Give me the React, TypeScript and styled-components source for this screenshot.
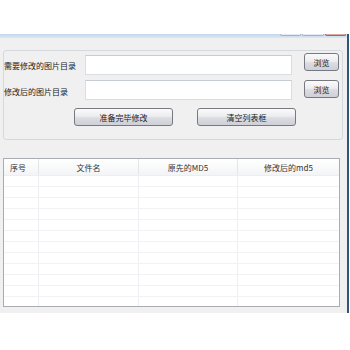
import React from 'react'
import styled, { createGlobalStyle } from 'styled-components'

const GlobalStyle = createGlobalStyle`
  html, body {
    margin: 0;
    padding: 0;
    background: #ffffff;
  }
  body {
    font-family: "Noto Sans CJK SC", "Liberation Sans", sans-serif;
    font-size: 8px;
    color: #222;
  }
`

const Page = styled.div`
  width: 350px;
  height: 350px;
  padding-top: 34px;
  box-sizing: border-box;
  background: #fff;
`

const Window = styled.div`
  width: 349px;
  height: 279px;
  box-sizing: border-box;
  display: flex;
  flex-direction: column;
  background: #f0f0f0;
  border-right: 2px solid #2f5676;
`

const CaptionBar = styled.div`
  height: 4px;
  display: flex;
  justify-content: flex-end;
  align-items: flex-start;
  gap: 1px;
  padding-right: 1px;
  background: linear-gradient(#c4d7ec, #dbe6f2);
`

const CaptionButton = styled.div<{ $close?: boolean; $w: number }>`
  width: ${({ $w }) => $w}px;
  height: 2px;
  box-sizing: border-box;
  border: 1px solid ${({ $close }) => ($close ? '#9a6a64' : '#a3b1c2')};
  border-top: none;
  border-radius: 0 0 3px 3px;
  background: ${({ $close }) => ($close ? '#d8aaa2' : '#e4ebf4')};
`

const Content = styled.div`
  flex: 1;
  display: flex;
  flex-direction: column;
  padding: 12px 4px 0 3px;
`

const GroupBox = styled.div`
  width: 340px;
  box-sizing: border-box;
  border: 1px solid #d3d9df;
  border-radius: 3px;
  padding: 2px 3px 13px 0;
  display: grid;
  grid-template-columns: 69px 207px 35px;
  column-gap: 12px;
  row-gap: 5px;
  align-items: start;
`

const Label = styled.div`
  align-self: center;
  white-space: nowrap;
  padding-top: 2px;
`

const TextBox = styled.div<{ $top?: number }>`
  height: 20px;
  margin-top: ${({ $top }) => $top ?? 0}px;
  box-sizing: border-box;
  background: #fff;
  border: 1px solid #d9dee4;
  border-top-color: #c7ccd2;
`

const Button = styled.button<{ $w?: number }>`
  width: ${({ $w }) => ($w ? `${$w}px` : '100%')};
  height: 18px;
  box-sizing: border-box;
  padding: 0;
  border: 1px solid #767a80;
  border-radius: 3px;
  background: linear-gradient(#fafafa 0%, #ededf0 45%, #dcdce2 55%, #cfd0d8 100%);
  font-family: "Noto Sans CJK SC", "Liberation Sans", sans-serif;
  font-size: 8px;
  color: #222;
  display: flex;
  align-items: center;
  justify-content: center;
`

const ActionRow = styled.div`
  grid-column: 1 / -1;
  display: flex;
  gap: 24px;
  padding-left: 70px;
  margin-top: 3px;
`

const Table = styled.div`
  margin-top: 18px;
  width: 337px;
  height: 149px;
  box-sizing: border-box;
  border: 1px solid #a9acb0;
  background: #fff;
  display: flex;
  flex-direction: column;
  overflow: hidden;
`

const Cols = '35px 100px 99px 1fr'

const HeaderRow = styled.div`
  height: 16px;
  flex-shrink: 0;
  display: grid;
  grid-template-columns: ${Cols};
  background: linear-gradient(#ffffff, #f3f4f6);
  border-bottom: 1px solid #eceef0;
`

const HeaderCell = styled.div<{ $left?: boolean }>`
  display: flex;
  align-items: center;
  justify-content: ${({ $left }) => ($left ? 'flex-start' : 'center')};
  padding-left: ${({ $left }) => ($left ? '6px' : '0')};
  border-right: 1px solid #e3e5e8;
  color: #333;
  &:last-child {
    border-right: none;
  }
`

const BodyRow = styled.div`
  height: 11px;
  flex-shrink: 0;
  display: grid;
  grid-template-columns: ${Cols};
  border-bottom: 1px solid #f1f2f4;
  box-sizing: border-box;
`

const BodyCell = styled.div`
  border-right: 1px solid #eceef1;
  &:last-child {
    border-right: none;
  }
`

const headers = ['序号', '文件名', '原先的MD5', '修改后的md5']

export default function App() {
  const rows = Array.from({ length: 12 }, (_, i) => i)

  return (
    <Page>
      <GlobalStyle />
      <Window>
        <CaptionBar>
          <CaptionButton $w={21} />
          <CaptionButton $w={22} />
          <CaptionButton $w={21} $close />
        </CaptionBar>
        <Content>
          <GroupBox>
            <Label>需要修改的图片目录</Label>
            <TextBox $top={2} />
            <Button>浏览</Button>

            <Label>修改后的图片目录</Label>
            <TextBox />
            <Button>浏览</Button>

            <ActionRow>
              <Button $w={99}>准备完毕修改</Button>
              <Button $w={99}>清空列表框</Button>
            </ActionRow>
          </GroupBox>

          <Table>
            <HeaderRow>
              {headers.map((h, i) => (
                <HeaderCell key={h} $left={i === 0}>{h}</HeaderCell>
              ))}
            </HeaderRow>
            {rows.map(r => (
              <BodyRow key={r}>
                {headers.map(h => <BodyCell key={h} />)}
              </BodyRow>
            ))}
          </Table>
        </Content>
      </Window>
    </Page>
  )
}
